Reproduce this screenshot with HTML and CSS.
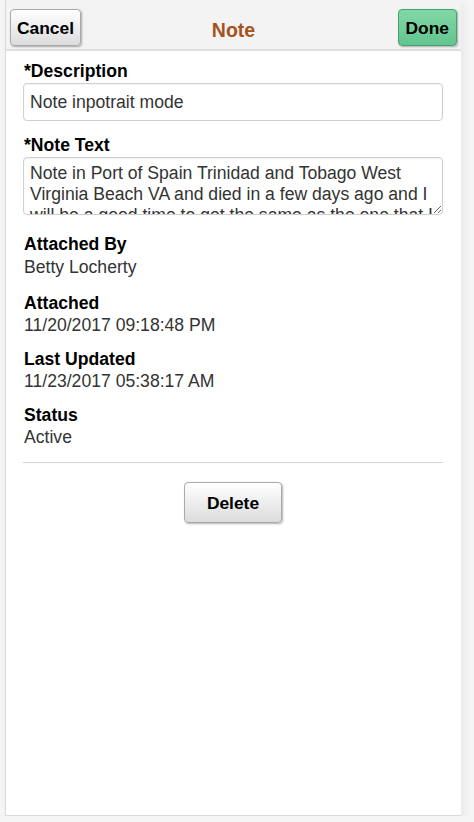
FILE: index.html
```html
<!DOCTYPE html>
<html lang="en">
<head>
<meta charset="utf-8">
<title>Note</title>
<link rel="stylesheet" href="styles.css">
</head>
<body>
<div class="panel">
  <header class="bar">
    <div class="bar-left"><button class="btn" type="button">Cancel</button></div>
    <h1 class="title">Note</h1>
    <div class="bar-right"><button class="btn btn-done" type="button">Done</button></div>
  </header>
  <main class="content">
    <label class="label" for="desc">*Description</label>
    <input class="field" id="desc" type="text" value="Note inpotrait mode">
    <label class="label label-gap" for="note">*Note Text</label>
    <textarea class="field area" id="note">Note in Port of Spain Trinidad and Tobago West Virginia Beach VA and died in a few days ago and I will be a good time to get the same as the one that I have been a while</textarea>
    <div class="info first">
      <div class="label">Attached By</div>
      <div class="value">Betty Locherty</div>
    </div>
    <div class="info second">
      <div class="label">Attached</div>
      <div class="value">11/20/2017 09:18:48 PM</div>
    </div>
    <div class="info">
      <div class="label">Last Updated</div>
      <div class="value">11/23/2017 05:38:17 AM</div>
    </div>
    <div class="info">
      <div class="label">Status</div>
      <div class="value">Active</div>
    </div>
    <hr class="rule">
    <div class="actions">
      <button class="btn btn-delete" type="button">Delete</button>
    </div>
  </main>
</div>
</body>
</html>
```
FILE: styles.css
```css
* { box-sizing: border-box; }
html, body { margin: 0; padding: 0; }
body {
  background: #f5f5f5;
  font-family: "Liberation Sans", Arial, sans-serif;
  font-size: 17.6px;
  color: #333;
}
.panel {
  margin-left: 5px;
  width: 456px;
  height: 816px;
  background: #fff;
  border-left: 1px solid #d9d9d9;
  border-bottom: 1px solid #d9d9d9;
  box-shadow: 3px 3px 8px rgba(0,0,0,0.06);
  display: flex;
  flex-direction: column;
}
.bar {
  height: 51px;
  background: #f3f3f3;
  border-bottom: 2px solid #dedede;
  display: grid;
  grid-template-columns: 1fr auto 1fr;
  align-items: start;
  padding: 9px 4px 0 4px;
}
.bar-right { display: flex; justify-content: flex-end; }
.title {
  margin: 0;
  padding-top: 9px;
  font-size: 19.5px;
  font-weight: bold;
  color: #a3531d;
  line-height: 24px;
}
.btn {
  font-family: "Liberation Sans", Arial, sans-serif;
  font-size: 17.4px;
  font-weight: bold;
  color: #000;
  height: 37px;
  padding: 0 6px;
  border: 1px solid #a9a9a9;
  border-radius: 4px;
  background: linear-gradient(#ffffff, #dcdcdc);
  box-shadow: 1px 1px 2px rgba(0,0,0,0.3);
  line-height: 34px;
}
.btn-done {
  background: linear-gradient(#82d8a6, #62c48e);
  border-color: #45a16d;
  padding: 0 7px;
}
.content {
  flex: 1;
  padding: 9px 18px 0 17px;
}
.label {
  display: block;
  font-weight: bold;
  color: #000;
  line-height: 22px;
  padding-left: 1px;
}
.label-gap { margin-top: 13px; }
.field {
  display: block;
  width: 100%;
  margin-top: 1px;
  font-family: "Liberation Sans", Arial, sans-serif;
  font-size: 17.6px;
  color: #333;
  border: 1px solid #cfcfcf;
  border-radius: 4px;
  box-shadow: inset 0 1px 2px rgba(0,0,0,0.06);
  background: #fff;
  height: 38px;
  padding: 0 6px;
  outline: none;
}
.area {
  height: 58px;
  padding: 5px 6px;
  line-height: 21px;
  overflow: hidden;
  resize: vertical;
}
.info { margin-top: 12px; }
.info.first { margin-top: 18px; }
.info.second { margin-top: 13px; }
.first .value { line-height: 24px; }
.value { line-height: 22px; padding-left: 1px; }
.rule {
  border: 0;
  border-top: 1px solid #d6d6d6;
  margin: 14px 0 0 0;
}
.actions {
  display: flex;
  justify-content: center;
  padding-top: 19px;
}
.btn-delete {
  width: 98px;
  height: 41px;
  line-height: 38px;
}
```
